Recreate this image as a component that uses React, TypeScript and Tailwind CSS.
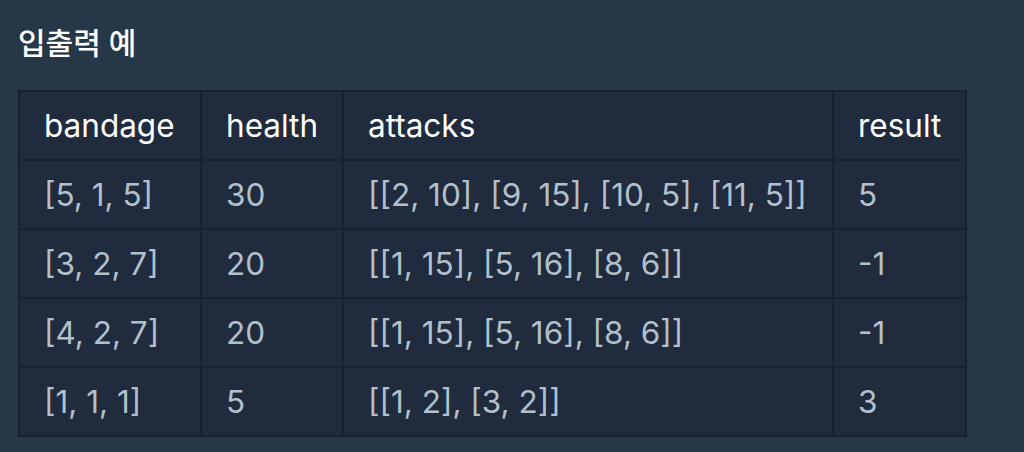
const rows = [
  ["[5, 1, 5]", "30", "[[2, 10], [9, 15], [10, 5], [11, 5]]", "5"],
  ["[3, 2, 7]", "20", "[[1, 15], [5, 16], [8, 6]]", "-1"],
  ["[4, 2, 7]", "20", "[[1, 15], [5, 16], [8, 6]]", "-1"],
  ["[1, 1, 1]", "5", "[[1, 2], [3, 2]]", "3"],
];

const cols = ["w-[182px]", "w-[142px]", "w-[490px]", "w-[133px]"];

export default function App() {
  return (
    <div className="min-h-[452px] w-[1024px] bg-[#263747] px-[18px] pt-[23px] font-['Inter','Noto_Sans_CJK_KR',sans-serif]">
      <h5 className="text-[30px] leading-[40px] font-medium text-white">입출력 예</h5>
      <table className="mt-[27px] border-collapse border-2 border-[#172130] bg-[#202b3d] text-[31.5px]">
        <thead>
          <tr>
            {["bandage", "health", "attacks", "result"].map((h, i) => (
              <th
                key={h}
                className={`${cols[i]} h-[69px] border-2 border-[#172130] pl-[24px] pr-0 text-left font-normal text-white`}
              >
                {h}
              </th>
            ))}
          </tr>
        </thead>
        <tbody>
          {rows.map((r, ri) => (
            <tr key={ri}>
              {r.map((c, ci) => (
                <td
                  key={ci}
                  className={`${cols[ci]} h-[69px] border-2 border-[#172130] pl-[24px] pr-0 text-[#b2c0cc]`}
                >
                  {c}
                </td>
              ))}
            </tr>
          ))}
        </tbody>
      </table>
    </div>
  );
}
